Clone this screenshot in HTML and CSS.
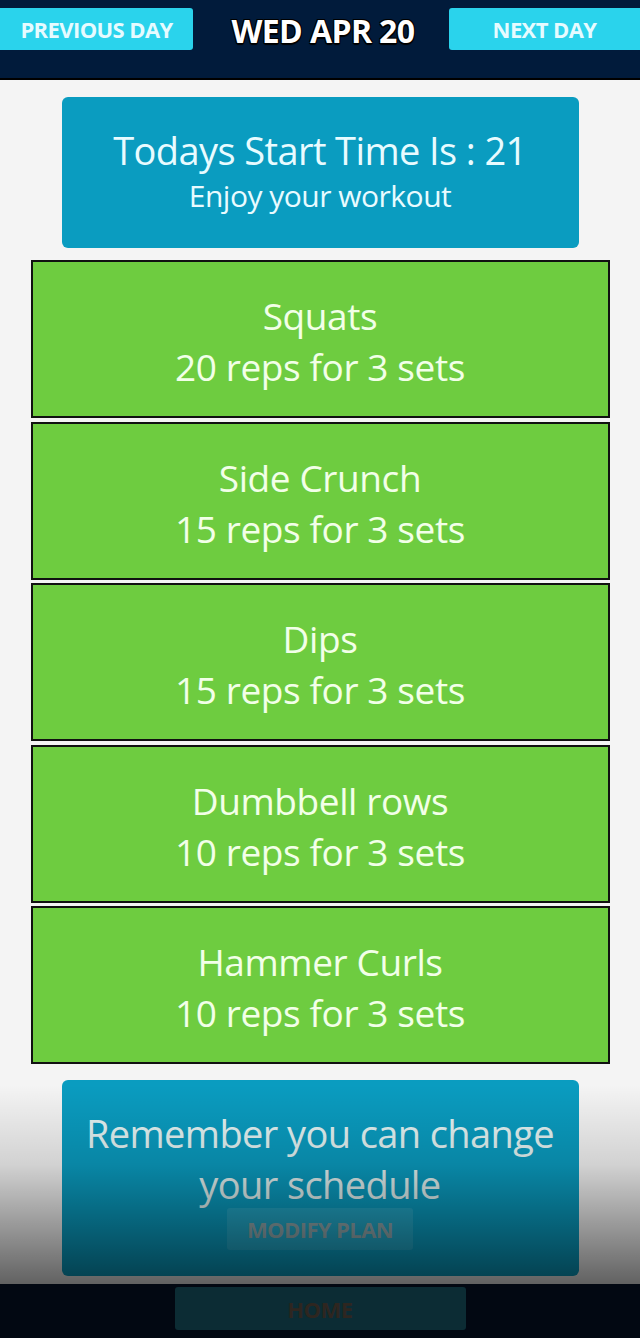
FILE: index.html
```html
<!DOCTYPE html>
<html>
<head>
<meta charset="utf-8">
<link rel="stylesheet" href="styles.css">
</head>
<body>
<div class="page">
  <header class="topbar">
    <div class="navbtn prev">PREVIOUS DAY</div>
    <div class="date">WED APR 20</div>
    <div class="navbtn next">NEXT DAY</div>
  </header>
  <main class="content">
    <section class="info">
      <div class="info-title">Todays Start Time Is : 21</div>
      <div class="info-sub">Enjoy your workout</div>
    </section>
    <section class="list">
      <div class="exercise"><div>Squats</div><div>20 reps for 3 sets</div></div>
      <div class="exercise"><div>Side Crunch</div><div>15 reps for 3 sets</div></div>
      <div class="exercise"><div>Dips</div><div>15 reps for 3 sets</div></div>
      <div class="exercise"><div>Dumbbell rows</div><div>10 reps for 3 sets</div></div>
      <div class="exercise"><div>Hammer Curls</div><div>10 reps for 3 sets</div></div>
    </section>
    <section class="reminder">
      <div class="reminder-text">Remember you can change<br>your schedule</div>
      <div class="modify">MODIFY PLAN</div>
    </section>
  </main>
  <footer class="bottombar">
    <div class="home">HOME</div>
  </footer>
  <div class="fade"></div>
</div>
</body>
</html>
```
FILE: styles.css
```css
* { box-sizing: border-box; }
html, body { margin: 0; padding: 0; }
body {
  font-family: "Open Sans", "Noto Sans", sans-serif;
  background: #f4f4f4;
}
.page {
  position: relative;
  width: 640px;
  height: 1338px;
  display: flex;
  flex-direction: column;
  overflow: hidden;
}
.topbar {
  height: 80px;
  background: #011b3b;
  border-bottom: 2px solid #000;
  display: flex;
  align-items: flex-start;
  justify-content: space-between;
  padding-top: 8px;
}
.navbtn {
  width: 193px;
  height: 42px;
  background: #2ad3ec;
  color: #e6fbff;
  font-weight: 700;
  font-size: 22px;
  letter-spacing: -0.6px;
  display: flex;
  align-items: center;
  justify-content: center;
  border-radius: 0 3px 3px 0;
}
.navbtn.next { width: 191px; border-radius: 3px 0 0 3px; }
.date {
  color: #fff;
  font-weight: 700;
  font-size: 32px;
  letter-spacing: -0.6px;
  line-height: 46px;
  margin-left: 4px;
  text-shadow: -1px -1px 0 #000, 1px -1px 0 #000, -1px 1px 0 #000, 1px 1px 0 #000, 0 2px 1px #000;
}
.content {
  flex: 1;
  display: flex;
  flex-direction: column;
  align-items: center;
  padding-top: 17px;
}
.info {
  width: 517px;
  height: 151px;
  background: #0a9cc0;
  border-radius: 6px;
  color: #e8fbff;
  display: flex;
  flex-direction: column;
  align-items: center;
  justify-content: center;
  padding-bottom: 2px;
}
.info-title { font-size: 38px; line-height: 48px; letter-spacing: -0.6px; }
.info-sub { font-size: 30px; line-height: 44px; letter-spacing: -0.5px; }
.list {
  margin-top: 12px;
  width: 579px;
  display: flex;
  flex-direction: column;
  gap: 3.5px;
}
.exercise {
  height: 158px;
  background: #6ecc40;
  border: 2px solid #111;
  color: #f2ffe8;
  font-size: 37px;
  line-height: 51px;
  letter-spacing: -0.4px;
  display: flex;
  flex-direction: column;
  align-items: center;
  justify-content: center;
  padding-top: 4px;
}
.reminder {
  margin-top: 16px;
  width: 517px;
  height: 196px;
  background: #0a9cc0;
  border-radius: 6px;
  color: #e4f4f4;
  display: flex;
  flex-direction: column;
  align-items: center;
  padding-top: 28px;
}
.reminder-text {
  font-size: 38px;
  line-height: 51px;
  text-align: center;
  letter-spacing: -0.6px;
}
.modify {
  margin-top: -2px;
  width: 186px;
  height: 42px;
  background: rgba(255,255,255,0.1);
  border-radius: 3px;
  color: #8fa7ab;
  font-weight: 700;
  font-size: 22px;
  letter-spacing: -0.6px;
  display: flex;
  align-items: center;
  justify-content: center;
}
.bottombar {
  height: 54px;
  background: #020812;
  display: flex;
  justify-content: center;
  padding-top: 3px;
}
.home {
  width: 291px;
  height: 43px;
  background: #0c2c34;
  border-radius: 3px;
  color: #2e2620;
  font-weight: 700;
  font-size: 22px;
  letter-spacing: -0.5px;
  display: flex;
  align-items: center;
  justify-content: center;
}
.fade {
  position: absolute;
  left: 0;
  right: 0;
  top: 1085px;
  height: 199px;
  background: linear-gradient(to bottom, rgba(0,0,0,0) 0%, rgba(0,0,0,0.14) 40%, rgba(0,0,0,0.6) 100%);
  pointer-events: none;
}
```
